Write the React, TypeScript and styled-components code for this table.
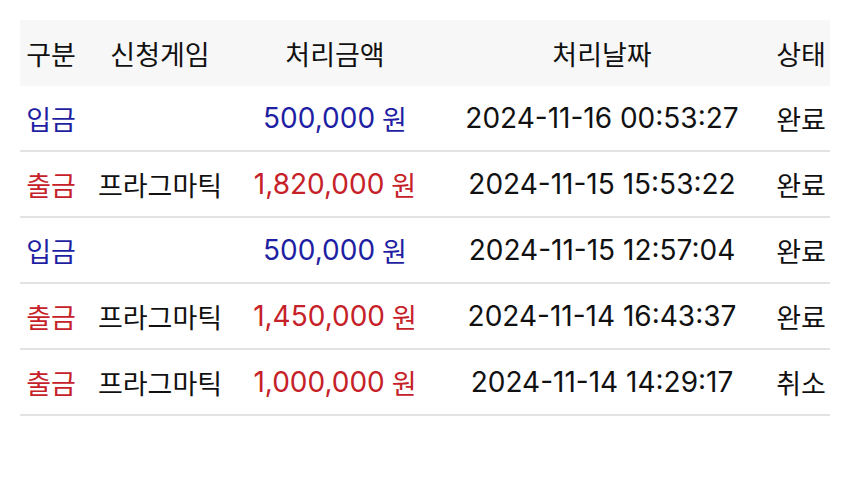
import React from 'react';
import styled, { createGlobalStyle } from 'styled-components';

const GlobalStyle = createGlobalStyle`
  body {
    margin: 0;
    background: #fff;
    font-family: Inter, "Noto Sans CJK KR", sans-serif;
    color: #111;
  }
`;

const Wrapper = styled.div`
  padding: 20px;
`;

const Table = styled.div`
  width: 810px;
  display: grid;
  grid-template-columns: 62px 156px 194px 340px 58px;
`;

const HeaderCell = styled.div`
  height: 66px;
  background: #f7f7f7;
  display: flex;
  align-items: center;
  justify-content: center;
  font-size: 27px;
  white-space: nowrap;
`;

type CellProps = {
  $tone?: 'in' | 'out';
  $korean?: boolean;
};

const Cell = styled.div<CellProps>`
  height: 64px;
  border-bottom: 2px solid #e3e3e3;
  display: flex;
  align-items: center;
  justify-content: center;
  white-space: nowrap;
  font-size: ${({ $korean }) => ($korean ? '27px' : '28px')};
  color: ${({ $tone }) => {
    if ($tone === 'in') return '#1f1fa3';
    if ($tone === 'out') return '#c62128';
    return '#111';
  }};
`;

const Won = styled.span`
  font-size: 27px;
  margin-left: 7px;
`;

type Row = {
  kind: 'in' | 'out';
  game: string;
  amount: string;
  date: string;
  status: string;
};

const rows: Row[] = [
  { kind: 'in', game: '', amount: '500,000', date: '2024-11-16 00:53:27', status: '완료' },
  { kind: 'out', game: '프라그마틱', amount: '1,820,000', date: '2024-11-15 15:53:22', status: '완료' },
  { kind: 'in', game: '', amount: '500,000', date: '2024-11-15 12:57:04', status: '완료' },
  { kind: 'out', game: '프라그마틱', amount: '1,450,000', date: '2024-11-14 16:43:37', status: '완료' },
  { kind: 'out', game: '프라그마틱', amount: '1,000,000', date: '2024-11-14 14:29:17', status: '취소' },
];

const headers = ['구분', '신청게임', '처리금액', '처리날짜', '상태'];

const App = () => {
  return (
    <Wrapper>
      <GlobalStyle />
      <Table>
        {headers.map((h) => (
          <HeaderCell key={h}>{h}</HeaderCell>
        ))}
        {rows.map((r) => (
          <React.Fragment key={r.date}>
            <Cell $tone={r.kind} $korean>{r.kind === 'in' ? '입금' : '출금'}</Cell>
            <Cell $korean>{r.game}</Cell>
            <Cell $tone={r.kind}>
              {r.amount}
              <Won>원</Won>
            </Cell>
            <Cell>{r.date}</Cell>
            <Cell $korean>{r.status}</Cell>
          </React.Fragment>
        ))}
      </Table>
    </Wrapper>
  );
};

export default App;
